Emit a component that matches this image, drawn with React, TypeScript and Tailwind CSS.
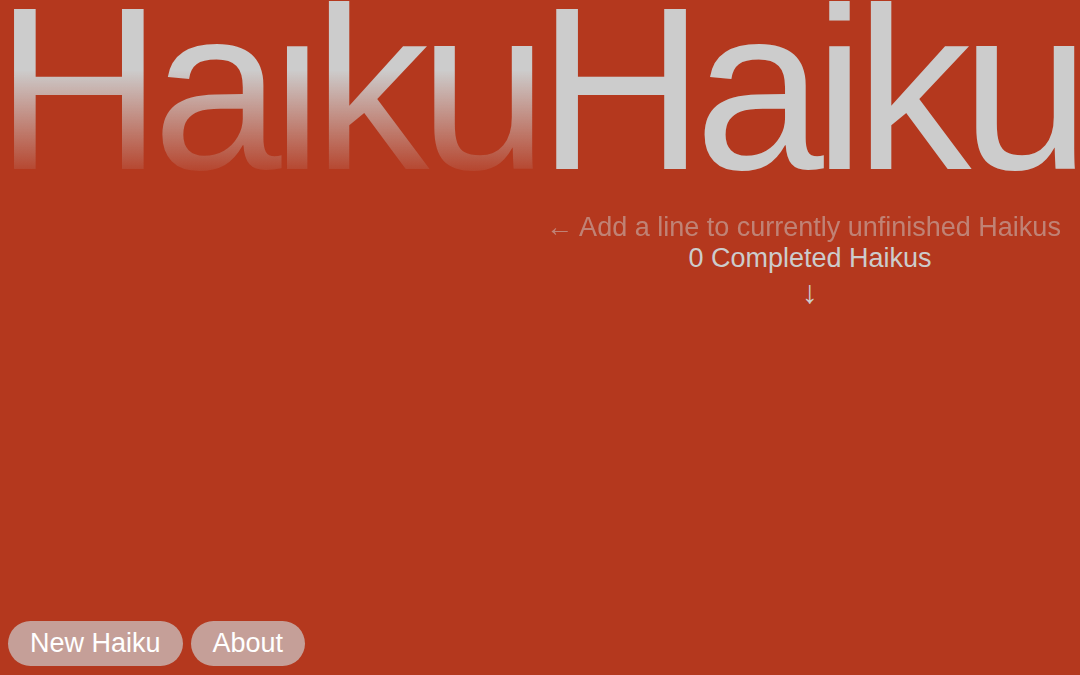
import React from 'react';

const font = { fontFamily: '"Liberation Sans", Arial, sans-serif' };

function Title() {
  return (
    <div className="h-[212px] shrink-0">
      <div className="flex whitespace-nowrap leading-none text-[232px] tracking-[-10px] -mt-[27px] -ml-[5px]">
        {/* Faded echo of the title, dotless i */}
        <span className="inline-block bg-[linear-gradient(to_bottom,#cccccc_0%,#cccccc_42%,rgba(204,204,204,0)_90%)] bg-clip-text text-transparent">
          Ha<span className="-ml-[6.5px] -mr-[6.4px]">ı</span>ku
        </span>
        <span className="inline-block text-[#cccccc] -ml-[1px]">Haiku</span>
      </div>
    </div>
  );
}

export default function App() {
  return (
    <div className="h-screen w-full overflow-hidden bg-[#b4381e] flex flex-col" style={font}>
      <Title />

      {/* Status */}
      <div className="flex justify-end">
        <div className="w-1/2 flex flex-col items-center text-[27px] leading-[31px] text-[#cccccc]">
          <p className="opacity-50 pr-[13px]">← Add a line to currently unfinished Haikus</p>
          <p>0 Completed Haikus</p>
          <p className="text-[32px] leading-[36px]">↓</p>
        </div>
      </div>

      {/* Actions */}
      <div className="mt-auto flex gap-[8px] pl-2 pb-[9px]">
        <button className="rounded-full bg-[#cccccc]/70 px-[22px] py-[7px] text-[27px] leading-[31px] text-white">
          New Haiku
        </button>
        <button className="rounded-full bg-[#cccccc]/70 px-[22px] py-[7px] text-[27px] leading-[31px] text-white">
          About
        </button>
      </div>
    </div>
  );
}
